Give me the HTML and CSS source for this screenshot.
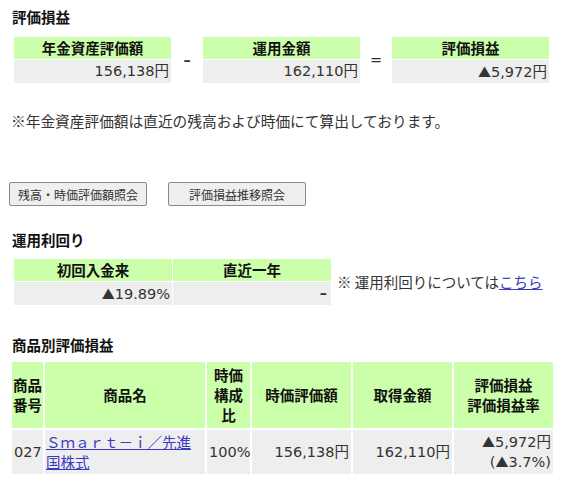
FILE: index.html
```html
<!DOCTYPE html>
<html lang="ja">
<head>
<meta charset="utf-8">
<title>評価損益</title>
<link rel="stylesheet" href="styles.css">
</head>
<body>
<div class="page">
  <h2 class="heading h-first">評価損益</h2>
  <div class="calc">
    <div class="box">
      <div class="box-head">年金資産評価額</div>
      <div class="box-val num">156,138円</div>
    </div>
    <div class="op op-minus num">–</div>
    <div class="box">
      <div class="box-head">運用金額</div>
      <div class="box-val num">162,110円</div>
    </div>
    <div class="op num">=</div>
    <div class="box">
      <div class="box-head">評価損益</div>
      <div class="box-val num"><span class="tri">▲</span>5,972円</div>
    </div>
  </div>
  <p class="note">※年金資産評価額は直近の残高および時価にて算出しております。</p>
  <div class="btns">
    <button class="btn" type="button">残高・時価評価額照会</button>
    <button class="btn" type="button">評価損益推移照会</button>
  </div>
  <h2 class="heading h-yield">運用利回り</h2>
  <div class="yield">
    <div class="ygrid">
      <div class="box-head">初回入金来</div>
      <div class="box-head">直近一年</div>
      <div class="box-val num"><span class="tri">▲</span>19.89%</div>
      <div class="box-val num dash">–</div>
    </div>
    <span class="ynote">※ 運用利回りについては<a href="#" class="link">こちら</a></span>
  </div>
  <h2 class="heading h-prod">商品別評価損益</h2>
  <table class="prod">
    <colgroup>
      <col class="c1"><col class="c2"><col class="c3"><col class="c4"><col class="c5"><col class="c6">
    </colgroup>
    <thead>
      <tr>
        <th>商品<br>番号</th>
        <th>商品名</th>
        <th>時価<br>構成<br>比</th>
        <th>時価評価額</th>
        <th>取得金額</th>
        <th>評価損益<br>評価損益率</th>
      </tr>
    </thead>
    <tbody>
      <tr>
        <td class="left num">027</td>
        <td class="left name"><a href="#" class="link">Ｓｍａｒｔ－ｉ／先進<br>国株式</a></td>
        <td class="right num">100%</td>
        <td class="right num">156,138円</td>
        <td class="right num">162,110円</td>
        <td class="right num"><span class="tri">▲</span>5,972円<br>(<span class="tri">▲</span>3.7%)</td>
      </tr>
    </tbody>
  </table>
</div>
</body>
</html>
```
FILE: styles.css
```css
* { box-sizing: border-box; }
html, body { margin: 0; padding: 0; background: #fff; }
body {
  font-family: "Noto Sans CJK JP", "Noto Sans", sans-serif;
  font-size: 14.5px;
  color: #222;
}
.page { padding: 0 0 0 12px; width: 565px; }

.num {
  font-family: "DejaVu Sans", "Noto Sans CJK JP", sans-serif;
}
.tri {
  font-family: "Noto Sans CJK JP", sans-serif;
  font-size: 13px;
}
.dash { font-weight: bold; padding-right: 4px !important; }

.heading {
  margin: 0;
  font-size: 14.5px;
  font-weight: bold;
  line-height: 20px;
  color: #111;
}
.h-first { padding-top: 7px; }
.h-yield { margin-top: 24px; }
.h-prod { margin-top: 30px; }

.calc {
  display: flex;
  margin-top: 10px;
  margin-left: 2px;
}
.box {
  width: 157px;
  display: flex;
  flex-direction: column;
  gap: 1px;
}
.box-head {
  background: #ccffaa;
  height: 22px;
  line-height: 22px;
  text-align: center;
  font-weight: bold;
  color: #111;
}
.box-val {
  background: #eeeeee;
  height: 23px;
  line-height: 23px;
  text-align: right;
  padding-right: 2px;
  color: #333;
}
.op {
  width: 32px;
  display: flex;
  align-items: center;
  justify-content: center;
  color: #333;
  line-height: 1;
}
.op-minus { font-weight: bold; }

.note {
  margin: 28px 0 0 -1px;
  line-height: 20px;
  color: #333;
  font-size: 14.7px;
}

.btns {
  margin-top: 51px;
  margin-left: -3px;
  display: flex;
  gap: 21px;
}
.btn {
  width: 138px;
  height: 24px;
  padding: 0;
  font-family: "Noto Sans CJK JP", sans-serif;
  font-size: 12px;
  color: #333;
  background: #efefef;
  border: 1px solid #8a8a8a;
  border-radius: 2px;
}

.yield {
  margin-top: 9px;
  margin-left: 2px;
  display: flex;
  align-items: center;
}
.ygrid {
  display: grid;
  grid-template-columns: 158px 158px;
  column-gap: 1px;
  row-gap: 1px;
}
.ynote {
  margin-left: 6px;
  color: #333;
  line-height: 20px;
}
.link {
  color: #3a3ac0;
  text-decoration: underline;
}

.prod {
  margin-top: 5px;
  margin-left: -2px;
  border-collapse: separate;
  border-spacing: 2px;
  table-layout: fixed;
  width: 545px;
}
.c1 { width: 31px; }
.c2 { width: 160px; }
.c3 { width: 43px; }
.c4 { width: 99px; }
.c5 { width: 99px; }
.c6 { width: 99px; }
.prod th {
  background: #ccffaa;
  height: 66px;
  padding: 0 1px;
  font-weight: bold;
  line-height: 20px;
  text-align: center;
  color: #111;
}
.prod td {
  background: #eeeeee;
  height: 44px;
  padding: 0 2px;
  line-height: 20px;
  color: #333;
}
.prod td.left { text-align: left; }
.prod td.right { text-align: right; }
.prod td.name { padding-left: 1px; }
```
